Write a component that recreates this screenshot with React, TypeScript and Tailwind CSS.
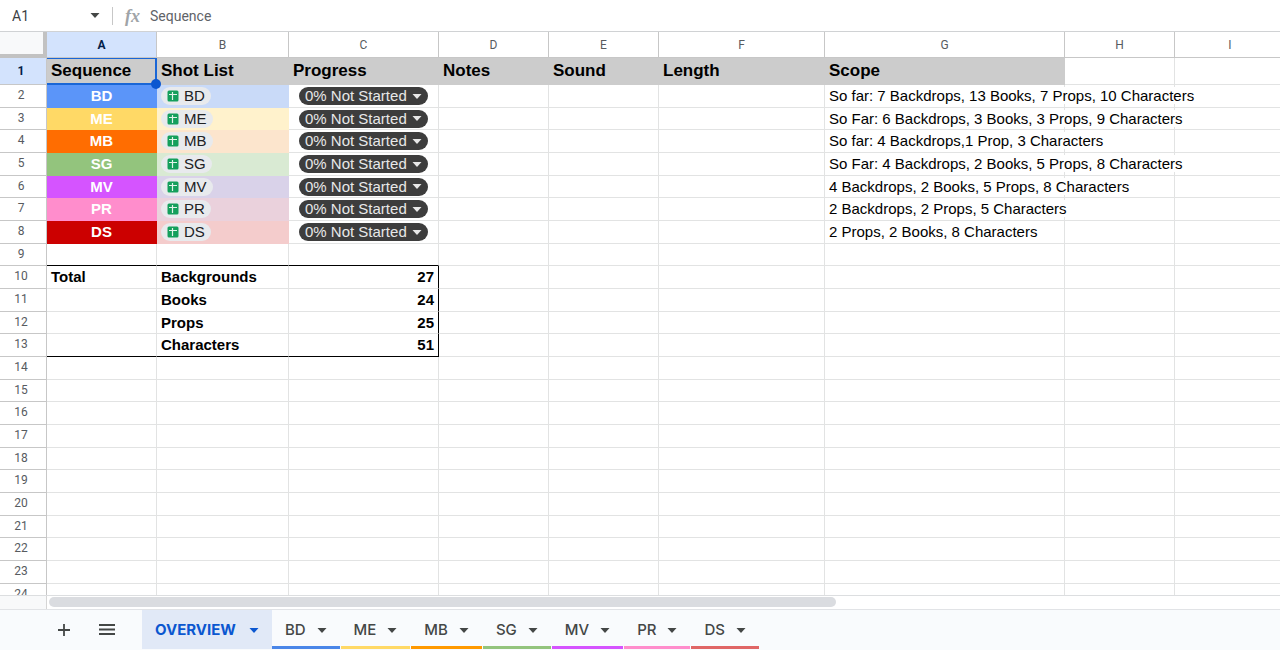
import { useState } from 'react';
import clsx from 'clsx';

const columns = [
    { name: 'A', width: 'w-[110px]' },
    { name: 'B', width: 'w-[132px]' },
    { name: 'C', width: 'w-[150px]' },
    { name: 'D', width: 'w-[110px]' },
    { name: 'E', width: 'w-[110px]' },
    { name: 'F', width: 'w-[166px]' },
    { name: 'G', width: 'w-[240px]' },
    { name: 'H', width: 'w-[110px]' },
    { name: 'I', width: '' },
];

const titles = ['Sequence', 'Shot List', 'Progress', 'Notes', 'Sound', 'Length', 'Scope'];

const sequences = [
    { code: 'BD', fill: 'bg-[#5b95f9]', tint: 'bg-[#c9daf8]', scope: 'So far: 7 Backdrops, 13 Books, 7 Props, 10 Characters' },
    { code: 'ME', fill: 'bg-[#ffd966]', tint: 'bg-[#fff2cc]', scope: 'So Far: 6 Backdrops, 3 Books, 3 Props, 9 Characters' },
    { code: 'MB', fill: 'bg-[#ff6d01]', tint: 'bg-[#fce5cd]', scope: 'So far: 4 Backdrops,1 Prop, 3 Characters' },
    { code: 'SG', fill: 'bg-[#93c47d]', tint: 'bg-[#d9ead3]', scope: 'So Far: 4 Backdrops, 2 Books, 5 Props, 8 Characters' },
    { code: 'MV', fill: 'bg-[#d554ff]', tint: 'bg-[#d9d2e9]', scope: '4 Backdrops, 2 Books, 5 Props, 8 Characters' },
    { code: 'PR', fill: 'bg-[#ff8dcc]', tint: 'bg-[#ead1dc]', scope: '2 Backdrops, 2 Props, 5 Characters' },
    { code: 'DS', fill: 'bg-[#cc0000]', tint: 'bg-[#f4cccc]', scope: '2 Props, 2 Books, 8 Characters' },
];

const totals = [
    { label: 'Backgrounds', value: 27 },
    { label: 'Books', value: 24 },
    { label: 'Props', value: 25 },
    { label: 'Characters', value: 51 },
];

const sheets = [
    { name: 'BD', line: 'border-[#4a86e8]' },
    { name: 'ME', line: 'border-[#ffd966]' },
    { name: 'MB', line: 'border-[#ff9900]' },
    { name: 'SG', line: 'border-[#93c47d]' },
    { name: 'MV', line: 'border-[#d554ff]' },
    { name: 'PR', line: 'border-[#ff8dcc]' },
    { name: 'DS', line: 'border-[#e06666]' },
];

const cell = 'border-r border-b border-[#e2e3e3] p-0 px-1';
const filled = 'border-r border-b border-transparent p-0 px-1';

function Caret({ className }: { className?: string }) {
    return (
        <svg viewBox="0 0 10 5" className={clsx('h-[5px] w-[10px] shrink-0', className)} fill="currentColor" aria-hidden="true">
            <path d="M0.5 0h9L5 5z" />
        </svg>
    );
}

function SheetIcon() {
    return (
        <svg viewBox="0 0 12 12" className="size-3 shrink-0" aria-hidden="true">
            <rect x="0.5" y="0.5" width="11" height="11" rx="1.5" fill="#149f5c" />
            <path d="M2 4.5h8M5.5 2v8" stroke="#e3f3ea" strokeWidth="1.2" />
        </svg>
    );
}

function RowHeader({ row, active }: { row: number; active?: boolean }) {
    return (
        <th
            scope="row"
            className={clsx(
                "border-r border-b border-[#c7c7c7] p-0 pr-1 text-center align-middle font-['Roboto',sans-serif] text-xs leading-4",
                active ? 'bg-[#d3e3fd] font-bold text-[#041e49]' : 'bg-white pb-0.5 font-normal text-[#575b5f]',
            )}
        >
            {row}
        </th>
    );
}

function EmptyCells({ count }: { count: number }) {
    return (
        <>
            {Array.from({ length: count }, (_, i) => (
                <td key={i} className={cell} />
            ))}
        </>
    );
}

function FormulaBar() {
    return (
        <div className="flex h-8 shrink-0 items-center border-b border-[#d0d2d4] bg-white font-['Roboto',sans-serif] text-sm">
            <input aria-label="Name box" defaultValue="A1" className="w-[78px] pl-3 text-[#3c4043] outline-none" />
            <button type="button" aria-label="Named ranges" className="flex h-6 w-[34px] items-center justify-center text-[#444746]">
                <Caret />
            </button>
            <div className="h-[18px] border-l border-[#c7c7c7]" />
            <span className="w-[37px] pl-3 font-['Liberation_Serif',serif] text-lg leading-6 font-bold text-[#a0a4a8] italic">fx</span>
            <input aria-label="Formula" defaultValue="Sequence" className="min-w-0 flex-1 text-[#5f6368] outline-none" />
        </div>
    );
}

function Grid() {
    return (
        <table className="w-full min-w-[1286px] table-fixed border-separate border-spacing-0 text-[15px] leading-[18px] whitespace-nowrap text-black">
            <colgroup>
                <col className="w-[47px]" />
                {columns.map((column) => (
                    <col key={column.name} className={column.width} />
                ))}
            </colgroup>
            <thead>
                <tr className="h-[26px]">
                    <td className="border-r-4 border-b-4 border-[#c2c2c2] bg-[#f8f9fa] p-0" />
                    {columns.map((column, i) => (
                        <th
                            key={column.name}
                            scope="col"
                            className={clsx(
                                "border-r border-b border-[#c7c7c7] p-0 font-['Roboto',sans-serif] text-xs leading-4",
                                i === 0 ? 'bg-[#d3e3fd] font-bold text-[#041e49]' : 'font-normal text-[#575b5f]',
                            )}
                        >
                            {column.name}
                        </th>
                    ))}
                </tr>
            </thead>
            <tbody className="[&>tr]:h-[23px] [&>tr:first-child]:h-[27px] [&>tr:nth-child(3n)]:h-[22px]">
                <tr>
                    <RowHeader row={1} active />
                    {titles.map((title, i) => (
                        <td key={title} className={clsx(filled, 'bg-[#cccccc] text-[17px] leading-6 font-bold', i === 0 && 'relative')}>
                            {title}
                            {i === 0 && (
                                <span className="absolute inset-0 -right-px -bottom-px z-20 border-2 border-t border-l-0 border-[#1a66d6]">
                                    <span className="absolute -right-1.5 -bottom-1.5 size-[10px] rounded-full bg-[#0b57d0]" />
                                </span>
                            )}
                        </td>
                    ))}
                    <EmptyCells count={2} />
                </tr>
                {sequences.map((sequence, i) => (
                    <tr key={sequence.code}>
                        <RowHeader row={i + 2} />
                        <td className={clsx(filled, sequence.fill, 'text-center font-bold text-white')}>{sequence.code}</td>
                        <td className={clsx(filled, sequence.tint)}>
                            <a
                                href={`#${sequence.code}`}
                                className="flex h-[18px] w-fit items-center gap-[5px] rounded-full bg-[#e8eaed] px-1.5 text-[#202124]"
                            >
                                <SheetIcon />
                                {sequence.code}
                            </a>
                        </td>
                        <td className={cell}>
                            <div className="relative mx-1.5 flex items-center">
                                <select
                                    aria-label={`${sequence.code} progress`}
                                    className="h-[18px] w-[129px] appearance-none rounded-full bg-[#3d3d3d] pl-1.5 text-[15px] leading-[18px] text-[#e8e8e8]"
                                >
                                    <option>0% Not Started</option>
                                </select>
                                <Caret className="pointer-events-none absolute right-1.5 text-[#e8e8e8]" />
                            </div>
                        </td>
                        <EmptyCells count={3} />
                        <td className={cell}>
                            <span className="relative z-10 bg-white">{sequence.scope}</span>
                        </td>
                        <EmptyCells count={2} />
                    </tr>
                ))}
                <tr>
                    <RowHeader row={9} />
                    <td className={clsx(cell, 'border-b-black')} />
                    <td className={clsx(cell, 'border-b-black')} />
                    <td className={clsx(cell, 'border-b-black')} />
                    <EmptyCells count={6} />
                </tr>
                {totals.map((total, i) => {
                    const bottom = i === totals.length - 1 && 'border-b-black';
                    return (
                        <tr key={total.label} className="font-bold">
                            <RowHeader row={i + 10} />
                            <td className={clsx(cell, bottom)}>{i === 0 && 'Total'}</td>
                            <td className={clsx(cell, bottom)}>{total.label}</td>
                            <td className={clsx(cell, bottom, 'border-r-black text-right')}>{total.value}</td>
                            <EmptyCells count={6} />
                        </tr>
                    );
                })}
                {Array.from({ length: 11 }, (_, i) => (
                    <tr key={i}>
                        <RowHeader row={i + 14} />
                        <EmptyCells count={9} />
                    </tr>
                ))}
            </tbody>
        </table>
    );
}

function SheetTabs({ current, onSelect }: { current: string; onSelect: (name: string) => void }) {
    return (
        <div className="flex h-[41px] shrink-0 items-stretch border-t border-[#e1e3e6] bg-[#f9fbfd] pb-px font-['Inter',sans-serif] text-[15px] text-[#444746]">
            <div className="flex w-[142px] shrink-0 items-center gap-[19px] pl-[52px]">
                <button type="button" aria-label="Add sheet" className="flex size-6 items-center justify-center">
                    <svg viewBox="0 0 12 12" className="size-3" stroke="currentColor" strokeWidth="1.8" aria-hidden="true">
                        <path d="M6 0v12M0 6h12" />
                    </svg>
                </button>
                <button type="button" aria-label="All sheets" className="flex size-6 items-center justify-center">
                    <svg viewBox="0 0 16 11" className="h-[11px] w-4" stroke="currentColor" strokeWidth="1.8" aria-hidden="true">
                        <path d="M0 1h16M0 5.5h16M0 10h16" />
                    </svg>
                </button>
            </div>
            <button
                type="button"
                onClick={() => onSelect('OVERVIEW')}
                className={clsx('flex items-center gap-[13px] px-[13px] pt-0.5 font-bold', current === 'OVERVIEW' && 'bg-[#e1e9f7] text-[#0b57d0]')}
            >
                OVERVIEW
                <Caret />
            </button>
            <div className="flex gap-px">
                {sheets.map((sheet) => (
                    <button
                        key={sheet.name}
                        type="button"
                        onClick={() => onSelect(sheet.name)}
                        className={clsx(
                            'flex items-center gap-[11px] border-b-[3px] px-[13px] pt-[5px] font-medium',
                            sheet.line,
                            current === sheet.name && 'bg-[#e1e9f7] text-[#0b57d0]',
                        )}
                    >
                        {sheet.name}
                        <Caret />
                    </button>
                ))}
            </div>
        </div>
    );
}

export default function App() {
    const [current, setCurrent] = useState('OVERVIEW');

    return (
        <div className="flex h-screen flex-col overflow-hidden bg-white font-['Liberation_Sans',sans-serif]">
            <FormulaBar />
            <main className="min-h-0 flex-1 overflow-hidden">
                <Grid />
            </main>
            <div className="flex h-[14px] shrink-0 border-t border-[#dcdee0]">
                <div className="w-[47px] shrink-0 border-r border-[#d5d5d5] bg-[#f8f9fa]" />
                <div className="flex-1 px-0.5 pt-px">
                    <div className="h-[10px] w-[64%] rounded-full bg-[#dadce0]" />
                </div>
            </div>
            <SheetTabs current={current} onSelect={setCurrent} />
        </div>
    );
}
